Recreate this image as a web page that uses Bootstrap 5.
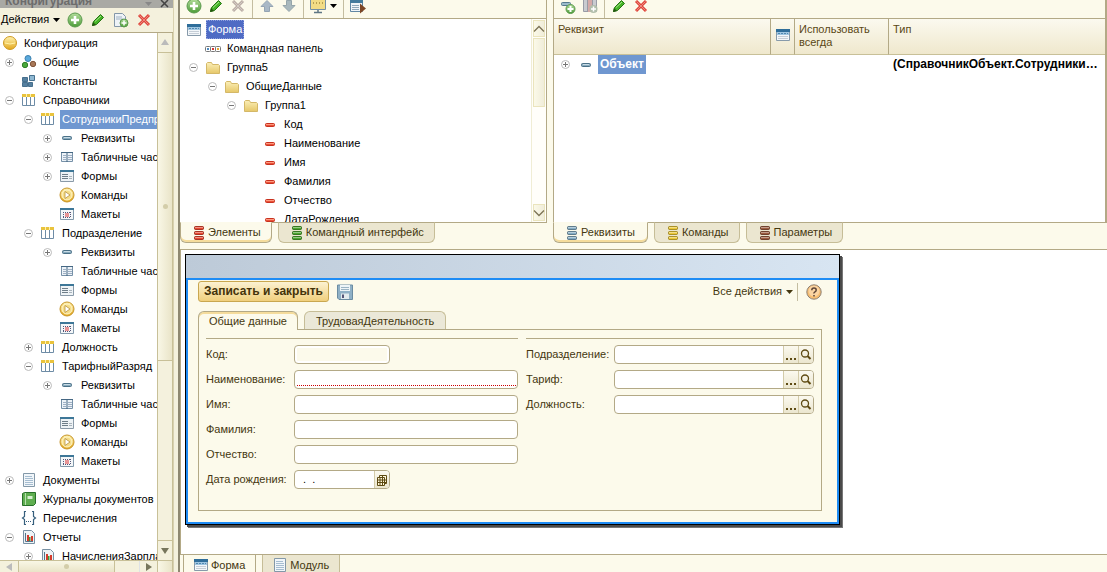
<!DOCTYPE html>
<html lang="ru">
<head>
<meta charset="utf-8">
<meta name="viewport" content="width=device-width, initial-scale=1">
<title>Конфигуратор</title>
<link href="https://cdn.jsdelivr.net/npm/bootstrap@5.3.0/dist/css/bootstrap.min.css" rel="stylesheet">
<style>
:root{--cream:#fcfaeb;--tan:#b3a986;--brown:#44370f;--pick:#6f97d0}
body{font:11px/19px "Liberation Sans",Arial,sans-serif;color:#000;background:var(--cream)}
button,input{font:inherit;color:inherit}
svg{display:block;flex:none}
.ic{width:16px;height:16px}
.plain{border:0;background:none;padding:0;display:flex;align-items:center}
.side{width:173px;background:#f4f1dd}
.side-title{height:8px;background:#a9a9a4;color:#6c6c6c;font-weight:bold;font-size:12px;line-height:14px;padding:0 4px 0 5px}
.side-tools{height:24px;padding:0 3px 0 1px;gap:7px}
.side-tree{border-top:1px solid var(--tan);background:#fff}
.splitter{width:7px;background:#f4f1dd;border-left:1px solid #d8d1b0;border-right:2px solid #8e8871}
.tree{list-style:none;margin:0;padding:1px 0 0}
.tree li{display:flex;height:19px;white-space:nowrap}
.tree .ex,.tree .ico{width:19px;height:19px;flex:none;display:flex;align-items:center;justify-content:center}
.tree .tx{margin-left:3px;padding:0 2px}
.l2{padding-left:19px}.l3{padding-left:38px}.l4{padding-left:57px}
.tree .sel{background:var(--pick);color:#fff;flex:1}
.tree .sel-focus{background:#4f6bc4;color:#fff;outline:1px dotted #8fa0dd;outline-offset:-1px}
.vbar{width:16px;background:linear-gradient(90deg,#f9f7e6,#e9e4c8);border-left:1px solid #c8c098;border-right:1px solid #c8c098}
.vbar button{height:20px;width:100%;border:0;background:#f4f1dd;color:#999;display:flex;align-items:center;justify-content:center;padding:0}
.vbar .up{border-bottom:1px solid #c8c098}.vbar .down{border-top:1px solid #c8c098;color:#77765c}
.vbar .slide{height:307px}
.vbar .rest{background:#f4f1dd;border-top:1px solid #c8c098}
.hbar{height:12px;border-top:1px solid #c8c098;background:#f4f1dd}
.hbar button{width:18px;padding:0;border:0;background:none;display:flex;align-items:center;justify-content:center;color:#bbb}
.hbar .thumb{width:97px;background:linear-gradient(#f9f7e6,#e9e4c8);border:solid #c8c098;border-width:0 1px}
.dot{width:5px;height:5px;border-radius:50%;background:#d3cda9}
.tools{height:18px;gap:6px;padding:0 6px}
.tools svg,.tools button{margin-top:-3px}
.sep{width:1px;height:18px;background:#c4bda0}
.top-panels{height:222px;background:var(--cream)}
.elements{width:367px;border-right:1px solid var(--tan);background:#fff}
.elements .tools,.attrs .tools{background:var(--cream);border-bottom:1px solid var(--tan);height:19px}
.thinbar{width:15px;padding:1px;gap:1px;background:#fffefa;border-left:1px solid #f0edd5}
.thinbar button{height:17px;padding:0;border:1px solid #eae4bd;background:linear-gradient(90deg,#fbf9e8,#f0edda);display:flex;align-items:center;justify-content:center;color:#7c7355}
.thinbar .thumb{height:69px;border:1px solid #eae4bd;background:linear-gradient(90deg,#fbf9e8,#f0edda)}
.attrs{margin-left:6px;border-left:1px solid var(--tan);border-right:2px solid var(--tan);background:#fff}
.attrs .tree{padding:0 0 0 3px}
.grid{width:100%;table-layout:fixed;border-collapse:separate;border-spacing:0}
.grid th{height:36px;padding:4px 4px 0;vertical-align:top;font-weight:400;line-height:13px;color:#5a4816;background:linear-gradient(#fbf9ef,#efe8cd);border-right:1px solid var(--tan);border-bottom:1px solid #c8c098}
.grid th:last-child{border-right:0}
.grid td{height:19px;padding:0 4px;overflow:hidden;text-overflow:ellipsis;white-space:nowrap;font-weight:bold;font-size:12px}
.tabs{height:28px;color:var(--brown);border-bottom:1px solid var(--tan)}
.tabs button{height:21px;border:1px solid #c6bd97;border-top-color:var(--tan);border-radius:0 0 6px 6px;background:#ebe6d0;padding:0 10px 0 12px;display:flex;align-items:center;gap:3px;white-space:nowrap}
.tabs .on{background:var(--cream);border-color:var(--tan);border-top-color:var(--cream);box-shadow:inset 0 -2px #f5dc9c}
.tabs .line{border-top:1px solid var(--tan);height:1px}
.work{background:#fff;border-left:1px solid var(--tan);padding:4px}
.preview{max-width:655px;border:1px solid #000;background:#1e8cf5;box-shadow:2px 2px #4a4a4a,3px 3px #777}
.preview-title{height:23px;background:linear-gradient(90deg,#bdcad8,#d8e5f2)}
.preview-body{margin:2px 1px 1px;border:solid #1e8cf5;border-width:0 1px 1px;background:var(--cream);color:var(--brown);padding:1px 15px 11px 10px}
.go{height:21px;border:1px solid #c9a750;border-radius:3px;background:linear-gradient(#fcf2d2,#f0cf7c);font-weight:bold;font-size:12px;line-height:17px;padding:0 5px;color:#44330a}
.ftabs{margin-top:9px;height:18px;gap:6px}
.ftabs button{height:18px;border:1px solid #c6bd97;border-bottom:0;border-radius:6px 6px 0 0;background:#ebe8d8;padding:0 11px;line-height:18px}
.ftabs .on{height:19px;padding:0 10px;background:var(--cream);border-color:var(--tan);box-shadow:inset 0 2px #f5dc9c;position:relative}
.fpanel{border:1px solid var(--tan);padding:8px 7px 15px}
.fcol{border-top:1px solid var(--tan);padding-top:6px}
.fcol .line-row{display:flex;height:19px;margin-bottom:6px}
.fcol label{width:88px;flex:none;white-space:nowrap}
.fin{display:flex;border:1px solid var(--tan);border-radius:4px;background:#fff;overflow:hidden;height:19px;flex:1;min-width:0}
.fin.short{flex:none;width:96px}
.fin input{border:0;outline:0;background:none;flex:1;min-width:0;padding:0 5px;line-height:17px;color:#000}
.fin.off input{background:var(--cream);margin:2px;height:13px}
.fin.need input{border-bottom:1px dotted #c00;margin:0 1px 1px 2px;height:15px}
.fin button{width:15px;padding:0;border:0;border-left:1px solid #d3cba9;background:linear-gradient(#fbf9ef,#ebe6cf);display:flex;align-items:center;justify-content:center}
.foot{height:18px;border-top:1px solid var(--tan);padding-left:3px;gap:6px;color:var(--brown)}
.foot button{border:1px solid #c6bd97;border-top:0;background:#ebe6d0;padding:0 10px 0 9px;display:flex;gap:2px;height:21px;align-items:center}
.foot .on{background:var(--cream);border-color:var(--tan)}
</style>
</head>
<body class="vh-100 d-flex overflow-hidden">
<svg class="position-absolute" width="0" height="0" aria-hidden="true">
<defs>
<linearGradient id="gold" x2="0" y2="1"><stop stop-color="#fff3b0"/><stop offset="1" stop-color="#e3a71c"/></linearGradient>
<linearGradient id="fold" x2="0" y2="1"><stop stop-color="#fbefb8"/><stop offset="1" stop-color="#e6c768"/></linearGradient>
<linearGradient id="grn" x2="0" y2="1"><stop stop-color="#b4dd9c"/><stop offset="1" stop-color="#4c9c38"/></linearGradient>
</defs>
<symbol id="plus" viewBox="0 0 9 9"><circle cx="4.5" cy="4.5" r="4" fill="#fff" stroke="#bbb"/><path d="M2 4.5h5M4.500 2v5" stroke="#777"/></symbol>
<symbol id="minus" viewBox="0 0 9 9"><circle cx="4.500" cy="4.500" r="4" fill="#fff" stroke="#bbb"/><path d="M2 4.500h5" stroke="#777"/></symbol>
<symbol id="ball" viewBox="0 0 16 16"><circle cx="8" cy="8" r="6.500" fill="url(#gold)" stroke="#cf9a22"/><path d="M3 8q5 2 10 0" stroke="#fff2a8" fill="none"/></symbol>
<symbol id="common" viewBox="0 0 16 16"><circle cx="7" cy="4.500" r="3" fill="#5aa9dc" stroke="#3b7fae"/><circle cx="4" cy="11" r="2.700" fill="#49a83c" stroke="#2f7f28"/><circle cx="12" cy="10" r="2.700" fill="#a87858" stroke="#80543a"/></symbol>
<symbol id="const" viewBox="0 0 16 16"><g fill="#56809f" stroke="#47708e"><path d="M1.500 4.500h5v4h-5zM1.500 9.500h5v4h-5zM7.500 9.500h4v4h-4z"/><path d="M8.500 2.500h5v5h-5z" fill="#8fb8d2"/></g></symbol>
<symbol id="ref" viewBox="0 0 16 16"><path d="M1.500 3.500h12v10h-12z" fill="#fff" stroke="#6e8ca6"/><path d="M5.500 4v10M9.500 4v10" stroke="#6e8ca6"/><path d="M1 2h13v3H1z" fill="#e9c33d"/><path d="M5.500 2v3M9.500 2v3" stroke="#fff2ab"/></symbol>
<symbol id="dash" viewBox="0 0 16 16"><rect x="3.500" y="6.500" width="9" height="3" rx="1" fill="#88aabd" stroke="#4b7187"/><path d="M5 7.500h6" stroke="#c8dbe5"/></symbol>
<symbol id="red" viewBox="0 0 16 16"><rect x="3.500" y="6.500" width="9" height="3" rx="1" fill="#e95138" stroke="#c8321f"/><path d="M4 7.500h8" stroke="#ff9a80"/></symbol>
<symbol id="tbl" viewBox="0 0 16 16"><path d="M2.500 3.500h11v9h-11z" fill="#edf3f8" stroke="#7791a8"/><path d="M2 3.500h12" stroke="#456783"/><path d="M8 4v9" stroke="#456783"/><path d="M4 6.500h3M4 8.500h3M4 10.500h3M9 6.500h4M9 8.500h4M9 10.500h4" stroke="#9fb0c4"/></symbol>
<symbol id="frm" viewBox="0 0 16 16"><path d="M1.500 2.500h13v11h-13z" fill="#eef3f6" stroke="#8a9aa8"/><path d="M1 2h14v2H1z" fill="#3d7798"/><path d="M3 6.500h6M3 8.500h6M3 10.500h6" stroke="#6e7d88"/><path d="M10 8.500h3M10 10.500h3" stroke="#aab4bc"/></symbol>
<symbol id="win" viewBox="0 0 16 16"><path d="M1.500 2.500h13v11h-13z" fill="#f3f7fa" stroke="#879aaa"/><path d="M1 2h14v3H1z" fill="#2e6d9a"/><path d="M2 5h12v3H2z" fill="#9fc6e2"/><path d="M3 6.500h10" stroke="#5088b0" stroke-dasharray="2 1"/><path d="M3 9.500h10M3 11.500h10" stroke="#c5cdd6"/></symbol>
<symbol id="cmd" viewBox="0 0 16 16"><circle cx="8" cy="8" r="7" fill="url(#gold)" stroke="#c79529"/><circle cx="8" cy="8" r="5" fill="#f5dd88" stroke="#fff6cc"/><path d="M6 4.500v7l5-3.500z" fill="#fff" stroke="#b8923c" stroke-width=".8"/></symbol>
<symbol id="tmpl" viewBox="0 0 16 16"><path d="M1.500 2.500h13v11h-13z" fill="#f4f7f9" stroke="#8299ab"/><path d="M1 2h14v2H1z" fill="#3d7798"/><path d="M4 6.500h8M4 11.500h8M4.500 6v6M11.500 6v6" stroke="#557" stroke-dasharray="1 1"/><path d="M6 8h4M6 10h4" stroke="#d33"/></symbol>
<symbol id="doc" viewBox="0 0 16 16"><path d="M2.500 1.500h11v13h-11z" fill="#f1f6fa" stroke="#8398a8"/><path d="M4 4.500h7M4 6.500h8M4 8.500h8M4 10.500h8M4 12.500h8" stroke="#a6bdd0"/></symbol>
<symbol id="book" viewBox="0 0 16 16"><path d="M1.500 2.500l2-1h11v11l-2 2h-11z" fill="#5fae50" stroke="#28702a"/><path d="M4.500 2v12" stroke="#b9deb0"/><path d="M6.500 5h5v3h-5z" fill="#d7efd0"/></symbol>
<symbol id="enum" viewBox="0 0 16 16"><path d="M5 1.500H3.500v5L1.500 8l2 1.500v5H5M11 1.500h1.500v5l2 1.500-2 1.500v5H11" fill="none" stroke="#365f7d" stroke-width="1.200"/><path d="M5 11.500h6" stroke="#365f7d" stroke-dasharray="1 1"/></symbol>
<symbol id="rep" viewBox="0 0 16 16"><path d="M2.500 1.500h8l3 3v10h-11z" fill="#eef3f6" stroke="#7891a4"/><path d="M4.500 4v8.500H12" fill="none" stroke="#56768c"/><path d="M6 12V6h2v6z" fill="#d43c2c"/><path d="M8 12V8h1.500v4z" fill="#3f9b38"/><path d="M10 12V7h2v5z" fill="#d43c2c"/></symbol>
<symbol id="fol" viewBox="0 0 16 16"><path d="M1.500 13.500v-10l1-1h4l1 2h6l1 1v8z" fill="url(#fold)" stroke="#d4b868"/></symbol>
<symbol id="bar" viewBox="0 0 16 16"><g fill="#fff" stroke="#777"><rect x=".5" y="5.500" width="5" height="5" rx="1"/><rect x="5.500" y="5.500" width="5" height="5" rx="1"/><rect x="10.500" y="5.500" width="5" height="5" rx="1"/></g><path d="M2 7h2v2H2z" fill="#4d8ac0"/><path d="M7 7h2v2H7z" fill="#d33"/><path d="M12 7h2v2h-2z" fill="#e2a52f"/></symbol>
<symbol id="add" viewBox="0 0 16 16"><circle cx="8" cy="8" r="7" fill="url(#grn)" stroke="#5b9a4d"/><path d="M8 4v8M4 8h8" stroke="#fff" stroke-width="2.600"/></symbol>
<symbol id="pen" viewBox="0 0 16 16"><path d="M2.500 13.500l1-4 7-7 3 3-7 7z" fill="#46b427" stroke="#257413"/><path d="M5 9.500l6-5.500" stroke="#a8e58c"/><path d="M2 14l1-4 3 3z" fill="#24570f"/></symbol>
<symbol id="del" viewBox="0 0 16 16"><path d="M3 3l10 10M13 3L3 13" stroke="currentColor" stroke-width="3"/><path d="M3.500 3.500l9 9M12.500 3.500l-9 9" stroke="#fff" stroke-opacity=".35"/></symbol>
<symbol id="dadd" viewBox="0 0 16 16"><path d="M1.500 1.500h8l3 3v10h-11z" fill="#eef3f7" stroke="#8397a8"/><path d="M3 5h6M3 7h7" stroke="#9fb2c2"/><circle cx="11" cy="11" r="4" fill="url(#grn)" stroke="#5b9a4d"/><path d="M11 8.500v5M8.500 11h5" stroke="#fff" stroke-width="1.500"/></symbol>
<symbol id="aup" viewBox="0 0 16 16"><path d="M8 2.500l6 6h-3.500v5h-5v-5H2z" fill="#a9b8c6" stroke="#94a4b3"/></symbol>
<symbol id="adn" viewBox="0 0 16 16"><path d="M8 13.500l6-6h-3.500v-5h-5v5H2z" fill="#a9b8bd" stroke="#95a5aa"/></symbol>
<symbol id="scr" viewBox="0 0 16 16"><path d="M.5 1.500h15v10H.5z" fill="#f2dc85" stroke="#7691a4"/><path d="M3 5h10" stroke="#7b641d" stroke-dasharray="1 2"/><path d="M8 12v2M4 14.500h8" stroke="#5e7684" stroke-width="1.500"/></symbol>
<symbol id="go" viewBox="0 0 16 16"><path d="M.5 1.500h12v12H.5z" fill="#f1f5f8" stroke="#6287a4"/><path d="M0 2h13v3H0z" fill="#447b9d"/><path d="M2 7.500h7M2 9.500h7M2 11.500h7" stroke="#91a9ba"/><path d="M10 5.500l6 5-6 5z" fill="#7d4727"/></symbol>
<symbol id="aadd" viewBox="0 0 16 16"><rect x="1.500" y="4.500" width="9" height="3" rx="1" fill="#9bbaca" stroke="#55798d"/><circle cx="10.500" cy="11" r="4.500" fill="url(#grn)" stroke="#5b9a4d"/><path d="M10.500 8v6M7.500 11h6" stroke="#fff" stroke-width="2"/></symbol>
<symbol id="cadd" viewBox="0 0 16 16"><path d="M1.500 1.500h13v12h-13z" fill="#c9cbd0" stroke="#999ba5"/><path d="M6 1h4v13H6z" fill="#d5a9a7"/><path d="M5.500 2v12M10.500 2v12" stroke="#999ba5"/><circle cx="11.500" cy="11" r="4" fill="#b1beab"/><path d="M11.500 8.500v5M9 11h5" stroke="#fff" stroke-width="1.500"/></symbol>
<symbol id="stack" viewBox="0 0 12 16"><g fill="currentColor" stroke="currentColor"><rect x="1.500" y="1.500" width="9" height="3" rx="1"/><rect x="1.500" y="6.500" width="9" height="3" rx="1"/><rect x="1.500" y="11.500" width="9" height="3" rx="1"/></g><g fill="none" stroke="#000" stroke-opacity=".28"><rect x="1.500" y="1.500" width="9" height="3" rx="1"/><rect x="1.500" y="6.500" width="9" height="3" rx="1"/><rect x="1.500" y="11.500" width="9" height="3" rx="1"/></g><path d="M2 2.500h8M2 7.500h8M2 12.500h8" stroke="#fff" stroke-opacity=".4"/></symbol>
<symbol id="save" viewBox="0 0 16 16"><path d="M.5 1h15v14.500H2L.5 14z" fill="#8fb0c6" stroke="#6b8ca2"/><path d="M3 1h10v6H3z" fill="#edf4f7"/><path d="M4 3.500h8M4 5.500h8" stroke="#9bb4c4"/><path d="M4 9.500h8V15H4z" fill="#e2eaee"/><path d="M5 10.500h2V14H5z" fill="#557"/></symbol>
<symbol id="help" viewBox="0 0 16 16"><circle cx="8" cy="8" r="7.200" fill="#f7bd70" stroke="#8d8175"/><circle cx="8" cy="7" r="5.500" fill="#fff" opacity=".35"/><path d="M5.800 6.200q0-2.200 2.200-2.200t2.200 1.900q0 1.300-1.200 1.900T8 9.500M8 11v1.500" fill="none" stroke="#5b4335" stroke-width="1.500"/></symbol>
<symbol id="mag" viewBox="0 0 12 12"><circle cx="5" cy="4.500" r="3.500" fill="none" stroke="#5e4a12" stroke-width="1.300"/><path d="M7.500 7l3 3" stroke="#5e4a12" stroke-width="2"/></symbol>
<symbol id="dots" viewBox="0 0 12 12"><path d="M1 9h2v2H1zM5 9h2v2H5zM9 9h2v2H9z" fill="#5e4a12"/></symbol>
<symbol id="cal" viewBox="0 0 12 12"><path d="M3.500 1.500h7v8h-7z" fill="#fff8dc" stroke="#5e4a12"/><path d="M1.500 3.500h7v8h-7z" fill="#fff8dc" stroke="#5e4a12"/><path d="M1 6h9M1 8.500h9M4 3v8M6.500 2v9" stroke="#5e4a12"/></symbol>
<symbol id="tri" viewBox="0 0 7 4"><path d="M0 0h7L3.500 4z" fill="currentColor"/></symbol>
<symbol id="chu" viewBox="0 0 12 8"><path d="M1 6.500l5-5 5 5" fill="none" stroke="currentColor" stroke-width="1.300"/></symbol>
<symbol id="chd" viewBox="0 0 12 8"><path d="M1 1.500l5 5 5-5" fill="none" stroke="currentColor" stroke-width="1.300"/></symbol>
</svg>

<aside class="side d-flex flex-column flex-shrink-0">
  <div class="side-title d-flex align-items-end overflow-hidden"><span class="me-auto">Конфигурация</span><svg class="me-2" width="7" height="6" viewBox="0 0 7 6"><path d="M0 0h7L3.500 4z" fill="#888"/></svg><svg width="9" height="9" viewBox="0 0 9 9"><path d="M1 1l7 7M8 1L1 8" stroke="#444" stroke-width="1.500"/></svg></div>
  <div class="side-tools d-flex align-items-center">
    <button class="plain">Действия<svg class="ms-1" width="7" height="4"><use href="#tri"/></svg></button>
    <button class="plain" aria-label="Добавить"><svg class="ic"><use href="#add"/></svg></button>
    <button class="plain" aria-label="Изменить"><svg class="ic"><use href="#pen"/></svg></button>
    <button class="plain" aria-label="Копировать"><svg class="ic"><use href="#dadd"/></svg></button>
    <button class="plain" aria-label="Удалить" style="color:#e0473c"><svg class="ic"><use href="#del"/></svg></button>
  </div>
  <div class="side-tree d-flex flex-grow-1 overflow-hidden">
    <ul class="tree flex-grow-1 overflow-hidden">
      <li><span class="ico"><svg class="ic"><use href="#ball"/></svg></span><span class="tx">Конфигурация</span></li>
      <li><span class="ex"><svg width="9" height="9"><use href="#plus"/></svg></span><span class="ico"><svg class="ic"><use href="#common"/></svg></span><span class="tx">Общие</span></li>
      <li><span class="ex"></span><span class="ico"><svg class="ic"><use href="#const"/></svg></span><span class="tx">Константы</span></li>
      <li><span class="ex"><svg width="9" height="9"><use href="#minus"/></svg></span><span class="ico"><svg class="ic"><use href="#ref"/></svg></span><span class="tx">Справочники</span></li>
      <li class="l2"><span class="ex"><svg width="9" height="9"><use href="#minus"/></svg></span><span class="ico"><svg class="ic"><use href="#ref"/></svg></span><span class="tx sel">СотрудникиПредприятия</span></li>
      <li class="l3"><span class="ex"><svg width="9" height="9"><use href="#plus"/></svg></span><span class="ico"><svg class="ic"><use href="#dash"/></svg></span><span class="tx">Реквизиты</span></li>
      <li class="l3"><span class="ex"><svg width="9" height="9"><use href="#plus"/></svg></span><span class="ico"><svg class="ic"><use href="#tbl"/></svg></span><span class="tx">Табличные части</span></li>
      <li class="l3"><span class="ex"><svg width="9" height="9"><use href="#plus"/></svg></span><span class="ico"><svg class="ic"><use href="#frm"/></svg></span><span class="tx">Формы</span></li>
      <li class="l3"><span class="ex"></span><span class="ico"><svg class="ic"><use href="#cmd"/></svg></span><span class="tx">Команды</span></li>
      <li class="l3"><span class="ex"></span><span class="ico"><svg class="ic"><use href="#tmpl"/></svg></span><span class="tx">Макеты</span></li>
      <li class="l2"><span class="ex"><svg width="9" height="9"><use href="#minus"/></svg></span><span class="ico"><svg class="ic"><use href="#ref"/></svg></span><span class="tx">Подразделение</span></li>
      <li class="l3"><span class="ex"><svg width="9" height="9"><use href="#plus"/></svg></span><span class="ico"><svg class="ic"><use href="#dash"/></svg></span><span class="tx">Реквизиты</span></li>
      <li class="l3"><span class="ex"></span><span class="ico"><svg class="ic"><use href="#tbl"/></svg></span><span class="tx">Табличные части</span></li>
      <li class="l3"><span class="ex"></span><span class="ico"><svg class="ic"><use href="#frm"/></svg></span><span class="tx">Формы</span></li>
      <li class="l3"><span class="ex"></span><span class="ico"><svg class="ic"><use href="#cmd"/></svg></span><span class="tx">Команды</span></li>
      <li class="l3"><span class="ex"></span><span class="ico"><svg class="ic"><use href="#tmpl"/></svg></span><span class="tx">Макеты</span></li>
      <li class="l2"><span class="ex"><svg width="9" height="9"><use href="#plus"/></svg></span><span class="ico"><svg class="ic"><use href="#ref"/></svg></span><span class="tx">Должность</span></li>
      <li class="l2"><span class="ex"><svg width="9" height="9"><use href="#minus"/></svg></span><span class="ico"><svg class="ic"><use href="#ref"/></svg></span><span class="tx">ТарифныйРазряд</span></li>
      <li class="l3"><span class="ex"><svg width="9" height="9"><use href="#plus"/></svg></span><span class="ico"><svg class="ic"><use href="#dash"/></svg></span><span class="tx">Реквизиты</span></li>
      <li class="l3"><span class="ex"></span><span class="ico"><svg class="ic"><use href="#tbl"/></svg></span><span class="tx">Табличные части</span></li>
      <li class="l3"><span class="ex"></span><span class="ico"><svg class="ic"><use href="#frm"/></svg></span><span class="tx">Формы</span></li>
      <li class="l3"><span class="ex"></span><span class="ico"><svg class="ic"><use href="#cmd"/></svg></span><span class="tx">Команды</span></li>
      <li class="l3"><span class="ex"></span><span class="ico"><svg class="ic"><use href="#tmpl"/></svg></span><span class="tx">Макеты</span></li>
      <li><span class="ex"><svg width="9" height="9"><use href="#plus"/></svg></span><span class="ico"><svg class="ic"><use href="#doc"/></svg></span><span class="tx">Документы</span></li>
      <li><span class="ex"></span><span class="ico"><svg class="ic"><use href="#book"/></svg></span><span class="tx">Журналы документов</span></li>
      <li><span class="ex"></span><span class="ico"><svg class="ic"><use href="#enum"/></svg></span><span class="tx">Перечисления</span></li>
      <li><span class="ex"><svg width="9" height="9"><use href="#minus"/></svg></span><span class="ico"><svg class="ic"><use href="#rep"/></svg></span><span class="tx">Отчеты</span></li>
      <li class="l2"><span class="ex"><svg width="9" height="9"><use href="#plus"/></svg></span><span class="ico"><svg class="ic"><use href="#rep"/></svg></span><span class="tx">НачисленияЗарплаты</span></li>
    </ul>
    <div class="vbar d-flex flex-column flex-shrink-0">
      <button class="up" aria-label="Вверх"><svg width="8" height="6" viewBox="0 0 8 6"><path d="M4 0l4 6H0z" fill="#bbb"/></svg></button>
      <div class="slide d-flex align-items-center justify-content-center"><span class="dot"></span></div>
      <div class="rest flex-grow-1"></div>
      <button class="down" aria-label="Вниз"><svg width="8" height="6" viewBox="0 0 8 6"><path d="M0 0h8L4 6z" fill="currentColor"/></svg></button>
    </div>
  </div>
  <div class="hbar d-flex">
    <button aria-label="Влево"><svg width="6" height="8" viewBox="0 0 6 8"><path d="M6 0v8L0 4z" fill="currentColor"/></svg></button>
    <div class="thumb d-flex align-items-center justify-content-center"><span class="dot"></span></div>
    <div class="flex-grow-1"></div>
    <button class="border-start" style="color:#77765c" aria-label="Вправо"><svg width="6" height="8" viewBox="0 0 6 8"><path d="M0 0v8l6-4z" fill="currentColor"/></svg></button>
    <div class="vbar"></div>
  </div>
</aside>
<div class="splitter flex-shrink-0"></div>

<main class="flex-grow-1 d-flex flex-column overflow-hidden">
  <div class="top-panels d-flex flex-shrink-0">
    <section class="elements d-flex flex-column flex-shrink-0">
      <div class="tools d-flex align-items-center">
        <button class="plain" aria-label="Добавить"><svg class="ic"><use href="#add"/></svg></button>
        <button class="plain" aria-label="Изменить"><svg class="ic"><use href="#pen"/></svg></button>
        <button class="plain" style="color:#bbaea6" aria-label="Удалить"><svg class="ic"><use href="#del"/></svg></button>
        <span class="sep"></span>
        <button class="plain" aria-label="Переместить вверх"><svg class="ic"><use href="#aup"/></svg></button>
        <button class="plain" aria-label="Переместить вниз"><svg class="ic"><use href="#adn"/></svg></button>
        <span class="sep"></span>
        <button class="plain" aria-label="Вид"><svg class="ic"><use href="#scr"/></svg><svg class="ms-1" width="7" height="4"><use href="#tri"/></svg></button>
        <span class="sep"></span>
        <button class="plain" aria-label="Проверить"><svg class="ic"><use href="#go"/></svg></button>
      </div>
      <div class="d-flex flex-grow-1 overflow-hidden">
        <ul class="tree flex-grow-1 overflow-hidden ps-1">
          <li><span class="ico"><svg class="ic"><use href="#win"/></svg></span><span class="tx sel-focus">Форма</span></li>
          <li><span class="ex"></span><span class="ico"><svg class="ic"><use href="#bar"/></svg></span><span class="tx">Командная панель</span></li>
          <li><span class="ex"><svg width="9" height="9"><use href="#minus"/></svg></span><span class="ico"><svg class="ic"><use href="#fol"/></svg></span><span class="tx">Группа5</span></li>
          <li class="l2"><span class="ex"><svg width="9" height="9"><use href="#minus"/></svg></span><span class="ico"><svg class="ic"><use href="#fol"/></svg></span><span class="tx">ОбщиеДанные</span></li>
          <li class="l3"><span class="ex"><svg width="9" height="9"><use href="#minus"/></svg></span><span class="ico"><svg class="ic"><use href="#fol"/></svg></span><span class="tx">Группа1</span></li>
          <li class="l4"><span class="ex"></span><span class="ico"><svg class="ic"><use href="#red"/></svg></span><span class="tx">Код</span></li>
          <li class="l4"><span class="ex"></span><span class="ico"><svg class="ic"><use href="#red"/></svg></span><span class="tx">Наименование</span></li>
          <li class="l4"><span class="ex"></span><span class="ico"><svg class="ic"><use href="#red"/></svg></span><span class="tx">Имя</span></li>
          <li class="l4"><span class="ex"></span><span class="ico"><svg class="ic"><use href="#red"/></svg></span><span class="tx">Фамилия</span></li>
          <li class="l4"><span class="ex"></span><span class="ico"><svg class="ic"><use href="#red"/></svg></span><span class="tx">Отчество</span></li>
          <li class="l4"><span class="ex"></span><span class="ico"><svg class="ic"><use href="#red"/></svg></span><span class="tx">ДатаРождения</span></li>
        </ul>
        <div class="thinbar d-flex flex-column flex-shrink-0">
          <button aria-label="Вверх"><svg width="12" height="8"><use href="#chu"/></svg></button>
          <div class="thumb"></div>
          <button class="mt-auto" aria-label="Вниз"><svg width="12" height="8"><use href="#chd"/></svg></button>
        </div>
      </div>
    </section>
    <section class="attrs flex-grow-1 overflow-hidden">
      <div class="tools d-flex align-items-center">
        <button class="plain" aria-label="Добавить реквизит"><svg class="ic"><use href="#aadd"/></svg></button>
        <button class="plain" aria-label="Добавить колонку"><svg class="ic"><use href="#cadd"/></svg></button>
        <span class="sep"></span>
        <button class="plain" aria-label="Изменить"><svg class="ic"><use href="#pen"/></svg></button>
        <button class="plain" style="color:#e0473c" aria-label="Удалить"><svg class="ic"><use href="#del"/></svg></button>
      </div>
      <table class="grid">
        <colgroup><col><col style="width:24px"><col style="width:94px"><col style="width:216px"></colgroup>
        <thead><tr><th>Реквизит</th><th aria-label="Форма"><svg class="ic mt-1"><use href="#win"/></svg></th><th>Использовать всегда</th><th>Тип</th></tr></thead>
        <tbody><tr><td class="p-0"><ul class="tree"><li><span class="ex justify-content-start ps-1"><svg width="9" height="9"><use href="#plus"/></svg></span><span class="ico"><svg class="ic"><use href="#dash"/></svg></span><span class="tx sel flex-grow-0">Объект</span></li></ul></td><td></td><td></td><td>(СправочникОбъект.СотрудникиПредприятия)</td></tr></tbody>
      </table>
    </section>
  </div>
  <div class="tabs d-flex flex-shrink-0">
    <div class="d-flex" style="width:367px">
      <button class="on"><svg width="12" height="16" style="color:#e94932"><use href="#stack"/></svg>Элементы</button><span class="line" style="width:6px"></span>
      <button><svg width="12" height="16" style="color:#4da52f"><use href="#stack"/></svg>Командный интерфейс</button><span class="line flex-grow-1"></span>
    </div>
    <div class="d-flex flex-grow-1" style="margin-left:6px">
      <button class="on pe-2 me-0"><svg width="12" height="16" style="color:#86adc4"><use href="#stack"/></svg><span class="pe-1">Реквизиты</span></button><span class="line" style="width:6px"></span>
      <button><svg width="12" height="16" style="color:#ecc938"><use href="#stack"/></svg>Команды</button><span class="line" style="width:6px"></span>
      <button><svg width="12" height="16" style="color:#9c5c40"><use href="#stack"/></svg>Параметры</button><span class="line flex-grow-1"></span>
    </div>
  </div>
  <section class="work flex-grow-1 overflow-hidden">
    <div class="preview">
      <div class="preview-title"></div>
      <form class="preview-body">
        <div class="d-flex align-items-center">
          <button type="button" class="go">Записать и закрыть</button>
          <button type="button" class="plain ms-2" aria-label="Записать"><svg class="ic"><use href="#save"/></svg></button>
          <button type="button" class="plain ms-auto">Все действия<svg class="ms-1" width="7" height="4"><use href="#tri"/></svg></button>
          <span class="sep mx-1"></span>
          <button type="button" class="plain ms-1" aria-label="Справка"><svg class="ic"><use href="#help"/></svg></button>
        </div>
        <div class="ftabs d-flex"><button type="button" class="on">Общие данные</button><button type="button">ТрудоваяДеятельность</button></div>
        <div class="fpanel d-flex gap-2">
          <div class="fcol" style="width:312px">
            <div class="line-row"><label for="f1">Код:</label><div class="fin short off"><input id="f1" readonly></div></div>
            <div class="line-row"><label for="f2">Наименование:</label><div class="fin need"><input id="f2"></div></div>
            <div class="line-row"><label for="f3">Имя:</label><div class="fin"><input id="f3"></div></div>
            <div class="line-row"><label for="f4">Фамилия:</label><div class="fin"><input id="f4"></div></div>
            <div class="line-row"><label for="f5">Отчество:</label><div class="fin"><input id="f5"></div></div>
            <div class="line-row"><label for="f6">Дата рождения:</label><div class="fin short"><input id="f6" value=" .  ."><button type="button" aria-label="Календарь"><svg width="12" height="12"><use href="#cal"/></svg></button></div></div>
          </div>
          <div class="fcol flex-grow-1">
            <div class="line-row"><label for="g1">Подразделение:</label><div class="fin"><input id="g1"><button type="button" aria-label="Выбрать"><svg width="12" height="12"><use href="#dots"/></svg></button><button type="button" aria-label="Открыть"><svg width="12" height="12"><use href="#mag"/></svg></button></div></div>
            <div class="line-row"><label for="g2">Тариф:</label><div class="fin"><input id="g2"><button type="button" aria-label="Выбрать"><svg width="12" height="12"><use href="#dots"/></svg></button><button type="button" aria-label="Открыть"><svg width="12" height="12"><use href="#mag"/></svg></button></div></div>
            <div class="line-row"><label for="g3">Должность:</label><div class="fin"><input id="g3"><button type="button" aria-label="Выбрать"><svg width="12" height="12"><use href="#dots"/></svg></button><button type="button" aria-label="Открыть"><svg width="12" height="12"><use href="#mag"/></svg></button></div></div>
          </div>
        </div>
      </form>
    </div>
  </section>
  <div class="foot d-flex flex-shrink-0 overflow-hidden">
    <button class="on"><svg class="ic"><use href="#win"/></svg>Форма</button>
    <button><svg class="ic"><use href="#doc"/></svg>Модуль</button>
  </div>
</main>
<script src="https://cdn.jsdelivr.net/npm/bootstrap@5.3.0/dist/js/bootstrap.bundle.min.js"></script>
</body>
</html>
